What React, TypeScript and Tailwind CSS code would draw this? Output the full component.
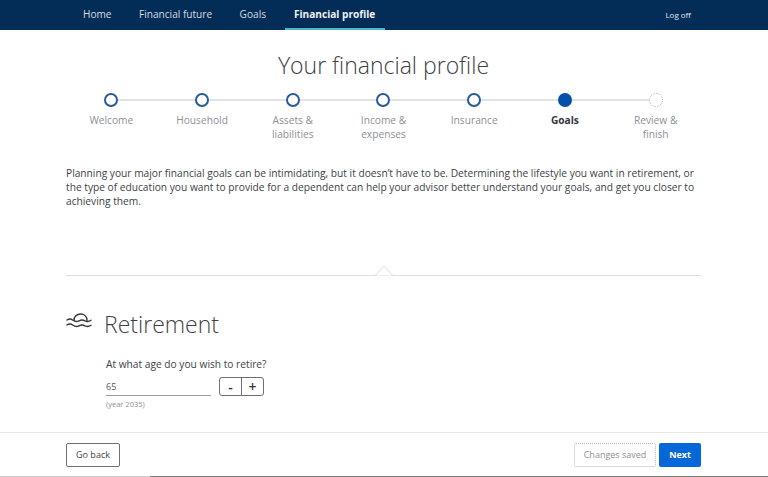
const navItems = ['Home', 'Financial future', 'Goals'];

const steps = [
  { label: 'Welcome', state: 'done' },
  { label: 'Household', state: 'done' },
  { label: 'Assets & liabilities', state: 'done' },
  { label: 'Income & expenses', state: 'done' },
  { label: 'Insurance', state: 'done' },
  { label: 'Goals', state: 'current' },
  { label: 'Review & finish', state: 'todo' },
];

function Step({ label, state, last }: { label: string; state: string; last: boolean }) {
  return (
    <div className="relative flex flex-col items-center">
      {!last && <div className="absolute left-1/2 top-[6px] h-[2px] w-full bg-[#e1e2e5]" />}
      {state === 'done' && <div className="relative h-[14px] w-[14px] rounded-full border-2 border-[#2a5a98] bg-white" />}
      {state === 'current' && <div className="relative h-[14px] w-[14px] rounded-full bg-[#0450a8]" />}
      {state === 'todo' && <div className="relative h-[14px] w-[14px] rounded-full border border-dotted border-[#b5b7bc] bg-white" />}
      <div className={state === 'current' ? 'mt-[6px] w-[70px] text-center text-[10.2px] font-bold leading-[14px] text-[#33363d]' : 'mt-[6px] w-[70px] text-center text-[10.2px] leading-[14px] text-[#8d9097]'}>
        {label}
      </div>
    </div>
  );
}

function RetirementIcon() {
  return (
    <svg className="mt-[5px] shrink-0" width="26" height="16" viewBox="0 0 26 16" fill="none" stroke="#33363d" strokeWidth="1.4" strokeLinecap="round">
      <path d="M8 7.4 C8 3.5 10.8 1 14.5 1 C18.2 1 21 3.5 21 7.4" />
      <path d="M1 7 C3 5.6 5 5.8 7 7.2 C9 8.6 11 8.8 13 7.8 C15 6.8 17 6.6 19 7.8 C21 8.9 23 8.6 25 7.2" />
      <path d="M1 12 C3 10.6 5 10.8 7 12.2 C9 13.6 11 13.8 13 12.8 C15 11.8 17 11.6 19 12.8 C21 13.9 23 13.6 25 12.2" />
    </svg>
  );
}

export default function App() {
  return (
    <div className="flex h-[477px] w-[768px] flex-col overflow-hidden bg-white font-['Open_Sans',sans-serif]">
      <header className="flex h-[30px] shrink-0 items-stretch justify-between bg-[#032d57] pl-[83px] pr-[77px]">
        <nav className="flex items-stretch gap-[27.5px]">
          {navItems.map((item) => (
            <a key={item} className="flex items-center pb-px text-[10.1px] text-[#d5dce4]">
              {item}
            </a>
          ))}
          <a className="-ml-[9px] flex items-center border-b-2 border-[#4db8c9] px-[9.5px] pt-px text-[10.1px] font-bold text-[#eef2f5]">
            Financial profile
          </a>
        </nav>
        <a className="flex items-center pb-px text-[8px] text-[#e3e7ec]">Log off</a>
      </header>

      <main className="flex-1 pl-[66px] pr-[67px]">
        <h1 className="mt-[19px] text-center text-[23px] font-light leading-[33px] text-[#3c3f46]">Your financial profile</h1>

        <div className="mt-[11px] grid grid-cols-7">
          {steps.map((step, i) => (
            <Step key={step.label} label={step.label} state={step.state} last={i === steps.length - 1} />
          ))}
        </div>

        <p className="mt-[25px] text-[10.2px] leading-[14px] text-[#3c3f46]">
          Planning your major financial goals can be intimidating, but it doesn’t have to be. Determining the lifestyle you want in retirement, or the type of education you want to provide for a dependent can help your advisor better understand your goals, and get you closer to achieving them.
        </p>

        <div className="relative mt-[67px] h-px bg-[#dcdde0]">
          <svg className="absolute left-[308px] top-[-10px]" width="20" height="11" viewBox="0 0 20 11" fill="white" stroke="#dcdde0">
            <path d="M0 10.5 L1 10.5 L10 1 L19 10.5 L20 10.5" />
          </svg>
        </div>

        <div className="mt-[32px] flex items-start">
          <RetirementIcon />
          <h2 className="ml-[12px] text-[23px] font-light leading-[33px] text-[#3c3f46]">Retirement</h2>
        </div>

        <div className="mt-[16px] pl-[40px]">
          <label className="block text-[10.2px] leading-[14px] text-[#3c3f46]">At what age do you wish to retire?</label>
          <div className="mt-[6px] flex items-end">
            <div className="h-[17px] w-[105px] border-b border-[#9a9ca1] pt-px text-[9px] leading-[14px] text-[#55585f]">65</div>
            <div className="ml-[8px] flex h-[19px] w-[45px] overflow-hidden rounded-[3px] border border-[#6d7076] text-[14px] font-semibold leading-[16px] text-[#33363d]">
              <button className="flex-1 border-r border-[#6d7076]">-</button>
              <button className="flex-1">+</button>
            </div>
          </div>
          <div className="mt-[3px] text-[7.5px] leading-[10px] text-[#8d9097]">(year 2035)</div>
        </div>
      </main>

      <footer className="flex h-[44px] shrink-0 items-start justify-between border-t border-[#e6e7e9] pl-[66px] pr-[67px] pt-[10px]">
        <button className="h-[24px] w-[54px] rounded-[2px] border border-[#6d7076] text-[9px] text-[#3c3f46]">Go back</button>
        <div className="flex gap-[3px]">
          <button className="h-[24px] w-[82px] rounded-[2px] border border-dotted border-[#b5b7bc] text-[9px] text-[#8d9097]">Changes saved</button>
          <button className="h-[24px] w-[42px] rounded-[2px] bg-[#0668d8] text-[9px] font-bold text-white">Next</button>
        </div>
      </footer>
      <div className="flex h-px shrink-0">
        <div className="w-[150px] bg-[#c9cacc]" />
        <div className="flex-1 bg-[#77797d]" />
      </div>
    </div>
  );
}
